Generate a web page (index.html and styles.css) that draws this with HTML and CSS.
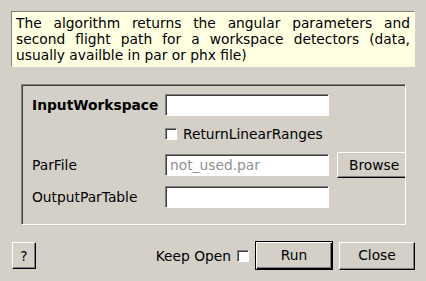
FILE: index.html
```html
<!DOCTYPE html>
<html lang="en">
<head>
    <meta charset="UTF-8">
    <title>Algorithm Dialog</title>
    <link rel="stylesheet" href="styles.css">
</head>
<body>
    <div class="dialog">
        <p class="info">The algorithm returns the angular parameters and second flight path for a workspace detectors (data, usually availble in par or phx file)</p>

        <div class="group">
            <div class="props">
                <label class="label bold">InputWorkspace</label>
                <input type="text" class="field">
                <span></span>

                <span></span>
                <label class="check-row"><span class="check"></span>ReturnLinearRanges</label>
                <span></span>

                <label class="label">ParFile</label>
                <input type="text" class="field" placeholder="not_used.par">
                <button class="btn browse">Browse</button>

                <label class="label">OutputParTable</label>
                <input type="text" class="field">
                <span></span>
            </div>
        </div>

        <div class="actions">
            <button class="btn help">?</button>
            <span class="spacer"></span>
            <label class="keep-open">Keep Open<span class="check"></span></label>
            <button class="btn run">Run</button>
            <button class="btn close">Close</button>
        </div>
    </div>
</body>
</html>
```

FILE: styles.css
```css
:root {
    --bg: #d4d0c8;
    --tip-bg: #ffffe1;
    --shadow: #808080;
    --dark: #404040;
    --light: #ffffff;
    --text: #000000;
}

* {
    margin: 0;
    padding: 0;
    box-sizing: border-box;
}

body {
    background-color: var(--bg);
    color: var(--text);
    font-family: 'DejaVu Sans', sans-serif;
    font-size: 13.8px;
    line-height: 16px;
}

.dialog {
    padding: 11px 11px 0 11px;
}

.info {
    background-color: var(--tip-bg);
    border: 1px solid;
    border-color: var(--shadow) var(--tip-bg) var(--tip-bg) var(--shadow);
    padding: 3px 4px;
    text-align: justify;
}

.group {
    margin: 17px 0 0 10px;
    width: 385px;
    border: 1px solid;
    border-color: var(--shadow) var(--light) var(--light) var(--shadow);
    box-shadow: inset 1px 1px 0 var(--dark);
    padding: 9px 0 16px 10px;
    overflow: hidden;
}

.props {
    display: grid;
    grid-template-columns: 125px 164px 1fr;
    grid-template-rows: 22px 20px 26px 22px;
    column-gap: 8px;
    row-gap: 8px;
    align-items: center;
}

.label {
    white-space: nowrap;
}

.bold {
    font-weight: bold;
}

.field {
    width: 164px;
    height: 22px;
    background-color: var(--light);
    border: 1px solid;
    border-color: var(--shadow) var(--light) var(--light) var(--shadow);
    box-shadow: inset 1px 1px 0 var(--dark);
    padding: 0 4px;
    font-family: inherit;
    font-size: 13.8px;
    outline: none;
}

.field::placeholder {
    color: #8f8f8f;
}

.check-row {
    display: flex;
    align-items: center;
    gap: 6px;
    white-space: nowrap;
}

.check {
    display: inline-block;
    width: 12px;
    height: 12px;
    background-color: var(--light);
    border: 1px solid;
    border-color: var(--shadow) var(--light) var(--light) var(--shadow);
    box-shadow: inset 1px 1px 0 var(--dark);
}

.btn {
    background-color: var(--bg);
    color: var(--text);
    font-family: inherit;
    font-size: 13.8px;
    line-height: 16px;
    border: 1px solid;
    border-color: var(--light) #000 #000 var(--light);
    box-shadow: inset -1px -1px 0 var(--shadow);
    cursor: pointer;
}

.browse {
    width: 80px;
    height: 26px;
    text-align: left;
    padding-left: 11px;
}

.actions {
    display: flex;
    align-items: center;
    margin-top: 16px;
    padding-left: 1px;
}

.spacer {
    flex: 1;
}

.help {
    width: 24px;
    height: 27px;
}

.keep-open {
    display: flex;
    align-items: center;
    gap: 6px;
    margin-right: 6px;
}

.run {
    width: 78px;
    height: 29px;
    padding-bottom: 2px;
    border: 1px solid #000;
    box-shadow: inset 1px 1px 0 var(--light), inset -1px -1px 0 #000, inset -2px -2px 0 var(--shadow);
    margin-right: 6px;
}

.close {
    width: 76px;
    height: 28px;
    padding-bottom: 2px;
}
```
